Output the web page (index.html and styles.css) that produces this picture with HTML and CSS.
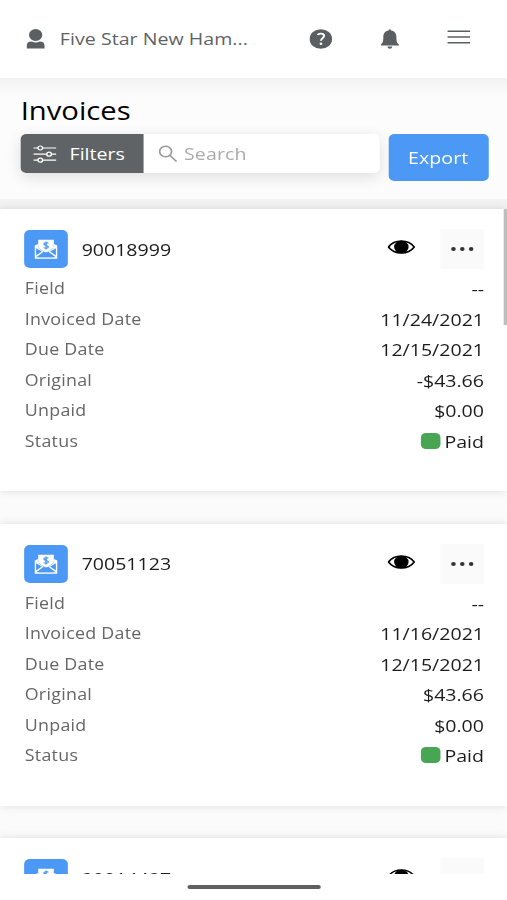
FILE: index.html
```html
<!DOCTYPE html>
<html lang="en">
<head>
<meta charset="utf-8">
<title>Invoices</title>
<link rel="stylesheet" href="styles.css">
</head>
<body>
<svg width="0" height="0" class="defs">
  <symbol id="mail" viewBox="0 0 20 20">
    <path d="M3.200.8h13.600v8L10 14 3.200 8.800z" fill="#fff"/>
    <path d="M0 6.500 3.200 5v4L8 12.700 1.500 18.200h17L12 12.700 16.800 9V5L20 6.500v13.300H0z" fill="#fff"/>
    <path d="M1.400 9.200v7.300l5-4zM18.600 9.200v7.300l-5-4zM3.500 18.300 10 12.900l6.500 5.400z" fill="#4b98f5"/>
    <path d="M12 4.400C11.300 3.500 8.200 3.300 8.200 5S12 6.200 12 7.900 8.800 9.600 8 8.500M10 2.500v8" fill="none" stroke="#4b98f5" stroke-width="1.200"/>
  </symbol>
  <symbol id="eye" viewBox="0 0 24 14">
    <path d="M.8 7C6-1 18-1 23.200 7 18 15 6 15 .8 7z" fill="#fff" stroke="#000" stroke-width="1.400"/>
    <ellipse cx="12" cy="7" rx="6.300" ry="6.300"/>
  </symbol>
  <symbol id="dots" viewBox="0 0 20 6">
    <circle cx="2.300" cy="3" r="2"/><circle cx="10" cy="3" r="2"/><circle cx="17.700" cy="3" r="2"/>
  </symbol>
</svg>
<div class="screen">
  <header class="topbar">
    <svg class="user" viewBox="0 0 16 20"><ellipse cx="8" cy="6" rx="5.800" ry="5.900"/><path d="M.2 19.500v-2.700Q.2 12.500 4.500 12.500 8 14.500 11.500 12.500q4.300 0 4.300 4.300v2.700z"/></svg>
    <span class="account">Five Star New Ham...</span>
    <svg class="help" viewBox="0 0 20 20"><circle cx="10" cy="10" r="9.800"/><path d="M7.300 6C8 4 12.800 4 12.800 6.800c0 2.200-2.700 2.400-2.700 5" fill="none" stroke="#fff" stroke-width="1.700"/><circle cx="10.100" cy="14.800" r="1.200" fill="#fff"/></svg>
    <svg class="bell" viewBox="0 0 16 20"><path d="M7 .8Q8-.4 9 .8v.8c3.500.6 4.700 3.300 4.700 6.500 0 4.500.5 6 2.200 7.500v1H.1v-1C1.800 14.100 2.300 12.600 2.300 8.100 2.300 4.900 3.500 2.200 7 1.600zM5.800 17.500h4.400q-.3 2.300-2.200 2.300t-2.200-2.300z"/></svg>
    <svg class="menu" viewBox="0 0 20 14"><path d="M0 1.200h20M0 7h20M0 12.700h20" stroke="#5c5f61" stroke-width="1.500"/></svg>
  </header>
  <section class="toolbar">
    <h1>Invoices</h1>
    <div class="controls">
      <div class="group">
        <button class="filters"><svg viewBox="0 0 20 18"><path d="M0 3h20M0 9.200h20M0 15.200h20" stroke="#fff" stroke-width="1.200"/><g fill="#5f6365" stroke="#fff" stroke-width="1.200"><circle cx="6" cy="3" r="2"/><circle cx="13.700" cy="9.200" r="2"/><circle cx="6" cy="15.200" r="2"/></g></svg><span>Filters</span></button>
        <div class="search"><svg viewBox="0 0 16 18"><circle cx="6" cy="6.500" r="5.200"/><path d="m9.800 10.500 5.700 6"/></svg><span>Search</span></div>
      </div>
      <button class="export">Export</button>
    </div>
  </section>
  <main class="list">
    <div class="thumb"></div>
    <article class="card">
      <div class="head"><span class="badge"><svg><use href="#mail"/></svg></span><span class="number">90018999</span><svg class="eye"><use href="#eye"/></svg><span class="more"><svg><use href="#dots"/></svg></span></div>
      <dl>
        <dt>Field</dt><dd>--</dd>
        <dt>Invoiced Date</dt><dd>11/24/2021</dd>
        <dt>Due Date</dt><dd>12/15/2021</dd>
        <dt>Original</dt><dd>-$43.66</dd>
        <dt>Unpaid</dt><dd>$0.00</dd>
        <dt>Status</dt><dd><i class="swatch"></i>Paid</dd>
      </dl>
    </article>
    <article class="card">
      <div class="head"><span class="badge"><svg><use href="#mail"/></svg></span><span class="number">70051123</span><svg class="eye"><use href="#eye"/></svg><span class="more"><svg><use href="#dots"/></svg></span></div>
      <dl>
        <dt>Field</dt><dd>--</dd>
        <dt>Invoiced Date</dt><dd>11/16/2021</dd>
        <dt>Due Date</dt><dd>12/15/2021</dd>
        <dt>Original</dt><dd>$43.66</dd>
        <dt>Unpaid</dt><dd>$0.00</dd>
        <dt>Status</dt><dd><i class="swatch"></i>Paid</dd>
      </dl>
    </article>
    <article class="card">
      <div class="head"><span class="badge"><svg><use href="#mail"/></svg></span><span class="number">90014497</span><svg class="eye"><use href="#eye"/></svg><span class="more"><svg><use href="#dots"/></svg></span></div>
    </article>
  </main>
  <footer class="homebar"><span></span></footer>
</div>
</body>
</html>
```
FILE: styles.css
```css
* { box-sizing: border-box; }
body { margin: 0; width: 507px; height: 900px; overflow: hidden; background: #fff; }
.defs { position: absolute; }
svg { display: block; flex: none; }
.screen {
  width: calc(507px / 1.15); height: 900px;
  transform: scaleX(1.15); transform-origin: 0 0;
  display: flex; flex-direction: column;
  font-family: "Open Sans", "Noto Sans", sans-serif;
  font-size: 17px; color: #1c1c1c; overflow: hidden;
}
.topbar { height: 78px; flex: none; display: flex; align-items: center; padding: 0 32px 1px 23px; color: #5f6365; background: #fff; }
.topbar svg { fill: #5c5f61; height: 20px; }
.user { width: 16px; }
.account { margin-left: 13px; width: 218px; white-space: nowrap; letter-spacing: .04px; }
.topbar .help { width: 20px; }
.bell { width: 16px; margin-left: 42px; }
.topbar .menu { width: 20px; height: 14px; margin: 0 0 3px 42px; }
.toolbar { height: 121px; flex: none; padding: 14px 16px 0 18px; background: linear-gradient(#f2f2f2, #fcfcfc 18px); }
h1 { margin: 0; font-size: 25.400px; line-height: 36px; font-weight: 400; color: #000; height: 42px; }
.controls { display: flex; gap: 8px; align-items: flex-start; }
button { font: inherit; border: 0; padding: 0; color: #fff; }
.group { display: flex; width: 311.500px; height: 39px; border-radius: 5px; box-shadow: 0 4px 14px rgba(0,0,0,.12); }
.filters { width: 107px; background: #5f6365; border-radius: 5px 0 0 5px; display: flex; align-items: center; padding-left: 11px; gap: 11.500px; }
.filters svg { width: 20px; height: 18px; }
.search { flex: 1; background: #fff; border-radius: 0 5px 5px 0; display: flex; align-items: center; gap: 6px; padding-left: 13px; color: #ababab; letter-spacing: .1px; }
.search svg { width: 16px; height: 18px; fill: none; stroke: #999; stroke-width: 1.500; }
.export { width: 87px; height: 47px; border-radius: 5px; background: #4b98f5; letter-spacing: .1px; }
.list { flex: none; position: relative; height: 675px; padding-top: 10px; overflow: hidden; background: #fbfbfb; display: flex; flex-direction: column; gap: 32.500px; box-shadow: inset 0 10px #f3f3f3; }
.card { height: 282px; flex: none; background: #fff; padding: 21px 20px 0 21px; box-shadow: 0 0 8px rgba(0,0,0,.12); }
.head { height: 38px; display: flex; align-items: center; }
.badge { width: 38px; height: 38px; border-radius: 5px; background: #4b98f5; display: grid; place-items: center; }
.badge svg { width: 20px; height: 20px; }
.number { margin-left: 12px; }
.eye { width: 24px; height: 14px; margin: 0 21.500px 4px auto; }
.more { width: 38px; height: 40px; background: #fafafa; display: grid; place-items: center; }
.more svg { width: 20px; height: 6px; fill: #333; }
dl { margin: 5px 0 0; display: grid; grid-template-columns: 1fr auto; grid-auto-rows: 30.500px; line-height: 30px; }
dt { font-size: 15.500px; font-weight: 500; letter-spacing: .24px; color: #666; padding-left: .5px; }
dd { margin: 0; padding-top: 1px; text-align: right; }
.swatch { display: inline-block; width: 17px; height: 16px; border-radius: 4.500px; background: #48a553; margin-right: 3.500px; vertical-align: -1px; }
.thumb { position: absolute; right: 0; top: 10px; width: 3px; height: 116px; background: #bdbdbd; z-index: 1; }
.homebar { flex: 1; background: #fff; display: flex; justify-content: center; padding: 11px 0 0 1px; }
.homebar span { width: 116px; height: 4px; border-radius: 2px; background: #606060; }
```
